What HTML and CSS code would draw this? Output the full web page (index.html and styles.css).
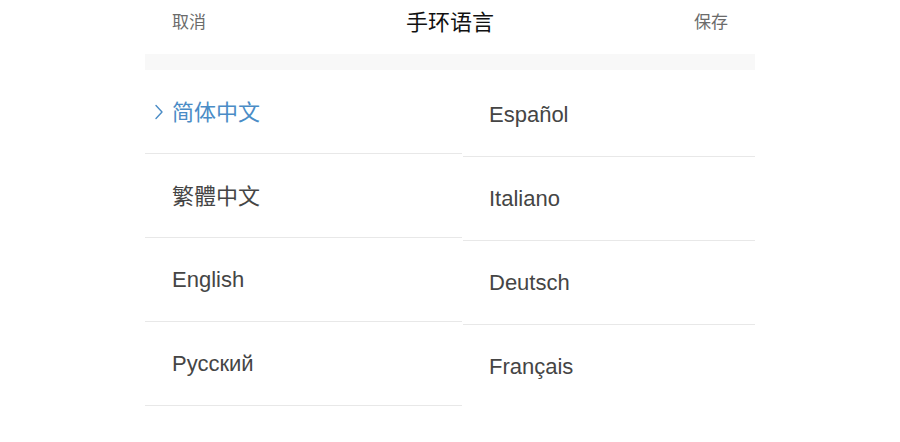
FILE: index.html
```
<!DOCTYPE html>
<html lang="zh">
<head>
<meta charset="utf-8">
<title>手环语言</title>
<link rel="stylesheet" href="styles.css">
</head>
<body>
<div class="page">
  <header class="topbar">
    <span class="action">取消</span>
    <span class="title">手环语言</span>
    <span class="action">保存</span>
  </header>
  <div class="band"></div>
  <div class="lists">
    <ul class="col col-left">
      <li class="row selected">
        <span class="mark"><svg width="8" height="16" viewBox="0 0 8 16"><path d="M1 1.5 L7 8 L1 14.5" fill="none" stroke="#4a8cc6" stroke-width="1.4" stroke-linejoin="round" stroke-linecap="round"/></svg></span>
        <span class="label cjk">简体中文</span>
      </li>
      <li class="row"><span class="mark"></span><span class="label cjk">繁體中文</span></li>
      <li class="row"><span class="mark"></span><span class="label">English</span></li>
      <li class="row"><span class="mark"></span><span class="label">Русский</span></li>
    </ul>
    <ul class="col col-right">
      <li class="row"><span class="mark"></span><span class="label">Español</span></li>
      <li class="row"><span class="mark"></span><span class="label">Italiano</span></li>
      <li class="row"><span class="mark"></span><span class="label">Deutsch</span></li>
      <li class="row last"><span class="mark"></span><span class="label">Français</span></li>
    </ul>
  </div>
</div>
</body>
</html>
```
FILE: styles.css
```
html, body {
  margin: 0;
  padding: 0;
  background: #ffffff;
}
body {
  font-family: "Liberation Sans", Arial, sans-serif;
}
.page {
  width: 610px;
  margin: 0 auto;
}
.topbar {
  height: 44px;
  display: flex;
  align-items: center;
  justify-content: space-between;
  padding: 0 27px;
  margin-bottom: 10px;
}
.action {
  font-size: 17px;
  line-height: 1;
  color: #6b6b6b;
  font-family: "Noto Sans CJK SC", sans-serif;
  padding-bottom: 3px;
}
.title {
  font-size: 22px;
  line-height: 1;
  color: #111111;
  font-family: "Noto Sans CJK SC", sans-serif;
  padding-bottom: 4px;
}
.band {
  height: 16px;
  background: #f8f8f8;
}
.lists {
  display: flex;
  align-items: flex-start;
}
.col {
  list-style: none;
  margin: 0;
  padding: 0;
}
.col-left {
  width: 317px;
}
.col-right {
  width: 292px;
  margin-left: 1px;
  margin-top: 3px;
}
.row {
  height: 83px;
  border-bottom: 1px solid #e8e8e8;
  display: flex;
  align-items: center;
}
.row.last {
  border-bottom-color: transparent;
}
.mark {
  width: 27px;
  padding-left: 10px;
  box-sizing: border-box;
  display: flex;
  align-items: center;
}
.col-right .mark {
  width: 26px;
}
.label {
  font-size: 22px;
  line-height: 1;
  color: #454545;
}
.label.cjk {
  font-family: "Noto Sans CJK SC", sans-serif;
  padding-bottom: 4px;
}
.selected .label {
  color: #4a8cc6;
}
```
